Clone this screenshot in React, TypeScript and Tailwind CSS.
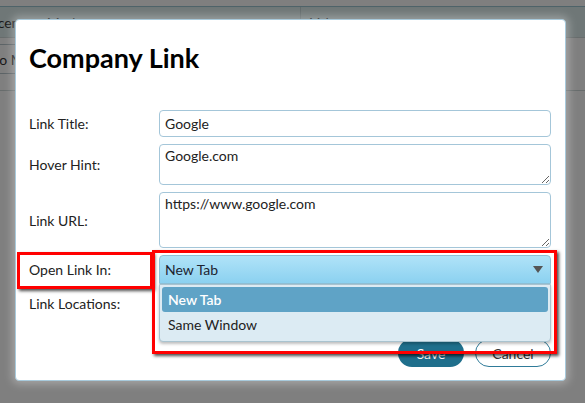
import React from 'react';

const font = { fontFamily: 'Lato, "Open Sans", sans-serif' };

const Field = ({ label, children, h }: { label: string; children: React.ReactNode; h: string }) => (
  <div className={`flex items-center ${h}`}>
    <div className="w-[130px] shrink-0 text-[14px] text-[#222]">{label}</div>
    <div className="flex-1 h-full">{children}</div>
  </div>
);

const App = () => {
  return (
    <div className="relative w-[585px] h-[403px] overflow-hidden bg-white" style={font}>
      {/* page behind the modal */}
      <div className="h-[6px]" />
      <div className="flex h-[32px] border-t border-b border-t-[#9cc7d3] border-b-[#cfd9d9] bg-[#dfeeee] text-[14px] text-[#333]">
        <div className="w-[301px] border-r border-[#c4d4d6] flex items-center">
          <span className="-ml-[21px] whitespace-nowrap">Placement Mode</span>
        </div>
        <div className="flex items-center pl-[9px]">Value</div>
      </div>
      <div className="flex items-start pt-[6px] h-[53px] border-b border-[#cfd9d9]">
        <div className="-ml-[22px] h-[30px] px-[10px] flex items-center border border-[#b8c6cc] rounded-[3px] text-[14px] text-[#333] whitespace-nowrap">
          Go Mode
        </div>
      </div>

      {/* overlay */}
      <div className="absolute inset-0 bg-black/50" />

      {/* dialog */}
      <div className="absolute left-[15px] top-[19px] w-[551px] h-[362px] bg-white border border-[#a8cadc] rounded-[4px] shadow-[0_0_9px_3px_rgba(255,255,255,0.3)] pl-[13px] pr-[14px]">
        <h1 className="mt-[22px] text-[27px] leading-[32px] font-bold text-black">Company Link</h1>

        <div className="mt-[36px] flex flex-col gap-[7px]">
          <Field label="Link Title:" h="h-[27px]">
            <div className="h-full border border-[#a4c6d9] rounded-[4px] px-[5px] flex items-center text-[14px] text-[#222]">
              Google
            </div>
          </Field>
          <Field label="Hover Hint:" h="h-[41px]">
            <textarea
              readOnly
              value="Google.com"
              className="block w-full h-full border border-[#a4c6d9] rounded-[4px] px-[5px] pt-[2px] text-[14px] leading-[18px] text-[#222] outline-none"
            />
          </Field>
          <Field label="Link URL:" h="h-[56px]">
            <textarea
              readOnly
              value="https://www.google.com"
              className="block w-full h-full border border-[#a4c6d9] rounded-[4px] px-[5px] pt-[2px] text-[14px] leading-[18px] text-[#222] outline-none"
            />
          </Field>
          <Field label="Open Link In:" h="h-[29px]">
            <div className="relative h-full">
              <div className="h-full flex items-center justify-between px-[5px] border border-[#8fc0d6] rounded-t-[4px] bg-gradient-to-b from-[#b0e3f8] to-[#8bd1f0] text-[14px] text-[#1d2430]">
                <span>New Tab</span>
                <svg width="10" height="7" viewBox="0 0 10 7" className="mr-[2px]">
                  <path d="M0 0h10L5 7z" fill="#555" />
                </svg>
              </div>
              {/* open menu */}
              <div className="absolute left-0 right-0 top-full z-10 h-[58px] bg-[#dcebf3] border border-[#a9c3cf] rounded-b-[4px] shadow-[0_2px_3px_rgba(0,0,0,0.25)] p-[2px]">
                <div className="h-[25px] flex items-center px-[6px] rounded-[3px] bg-[#5fa3c6] text-white font-semibold text-[14px]">
                  New Tab
                </div>
                <div className="h-[25px] flex items-center px-[6px] text-[14px] text-[#222]">Same Window</div>
              </div>
            </div>
          </Field>
          <Field label="Link Locations:" h="h-[24px]">
            <div />
          </Field>
        </div>

        <div className="mt-[24px] flex justify-end gap-[11px]">
          <button className="h-[28px] w-[66px] rounded-[14px] bg-[#1f6f8c] text-white text-[14px]">Save</button>
          <button className="h-[28px] w-[76px] rounded-[14px] bg-white border border-[#2f7b99] text-[#333] text-[14px]">
            Cancel
          </button>
        </div>
      </div>

      {/* annotation boxes */}
      <div className="absolute left-[17px] top-[252px] w-[136px] h-[37px] border-[3px] border-[#ff0000] shadow-[2px_2px_3px_rgba(0,0,0,0.7)]" />
      <div className="absolute left-[152px] top-[250px] w-[405px] h-[104px] border-[3px] border-[#ff0000] shadow-[2px_2px_3px_rgba(0,0,0,0.7)] z-20" />
    </div>
  );
};

export default App;
